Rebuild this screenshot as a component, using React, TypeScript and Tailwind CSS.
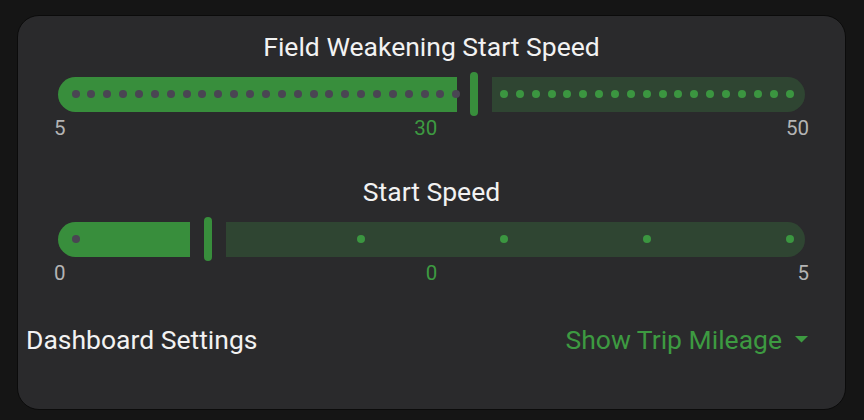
import React from "react";

const TRACK_W = 749;
const TRACK_H = 35;

type SliderProps = {
  title: string;
  steps: number;
  fillW: number;
  gapL: number;
  gapR: number;
  minLabel: string;
  valueLabel: string;
  maxLabel: string;
};

const Slider = ({ title, steps, fillW, gapL, gapR, minLabel, valueLabel, maxLabel }: SliderProps) => {
  const inactiveStart = fillW + gapL + 8 + gapR;
  const span = TRACK_W - TRACK_H;
  const dots = Array.from({ length: steps + 1 }, (_, i) => 17.5 + (i * span) / steps);

  return (
    <div className="flex flex-col">
      <div className="text-center text-[26.5px] leading-[30px] text-[#f2f2f2]">{title}</div>
      <div className="relative mt-[10px] mx-[40px] h-[44px] flex items-center">
        <div className="h-[35px] bg-[#388e3c] rounded-l-full rounded-r-[3px]" style={{ width: fillW }} />
        <div className="h-[44px] w-[8px] rounded-full bg-[#388e3c] z-10" style={{ marginLeft: gapL }} />
        <div className="h-[35px] flex-1 bg-[#2f4532] rounded-r-full rounded-l-[3px]" style={{ marginLeft: gapR }} />
        {dots.map((x, i) => {
          if (x <= fillW + 2) {
            return (
              <span
                key={i}
                className="absolute top-[18px] h-[8px] w-[8px] -ml-[4px] rounded-full bg-[#4a4553]"
                style={{ left: x }}
              />
            );
          }
          if (x >= inactiveStart + 6) {
            return (
              <span
                key={i}
                className="absolute top-[18px] h-[8px] w-[8px] -ml-[4px] rounded-full bg-[#3b9640]"
                style={{ left: x }}
              />
            );
          }
          return null;
        })}
      </div>
      <div className="mx-[36px] flex justify-between text-[20.5px] leading-[24px]">
        <span className="text-[#b4b4b4]">{minLabel}</span>
        <span className="text-[#3d9a41]">{valueLabel}</span>
        <span className="text-[#b4b4b4]">{maxLabel}</span>
      </div>
    </div>
  );
};

export default function App() {
  return (
    <div
      className="w-full h-[420px] bg-[#151515] pt-[15px] pl-[17px]"
      style={{ fontFamily: "Roboto, 'Noto Sans', sans-serif" }}
    >
      <div className="w-[829px] h-[395px] rounded-[22px] border border-[#0b0b0b] bg-[#2a2a2c] pt-[16px] flex flex-col">
        <Slider
          title="Field Weakening Start Speed"
          steps={45}
          fillW={399}
          gapL={13}
          gapR={14}
          minLabel="5"
          valueLabel="30"
          maxLabel="50"
        />
        <div className="mt-[37px]">
          <Slider
            title="Start Speed"
            steps={5}
            fillW={132}
            gapL={14}
            gapR={14}
            minLabel="0"
            valueLabel="0"
            maxLabel="5"
          />
        </div>
        <div className="mt-[40px] ml-[8px] mr-[37px] flex items-center justify-between text-[26.5px] leading-[30px]">
          <span className="text-[#f2f2f2]">Dashboard Settings</span>
          <div className="flex items-center gap-[13px] text-[#3d9a41]">
            <span>Show Trip Mileage</span>
            <svg width="13" height="7" viewBox="0 0 13 7" className="mb-[2px]">
              <polygon points="0,0 13,0 6.5,6.5" fill="#3d9a41" />
            </svg>
          </div>
        </div>
      </div>
    </div>
  );
}
